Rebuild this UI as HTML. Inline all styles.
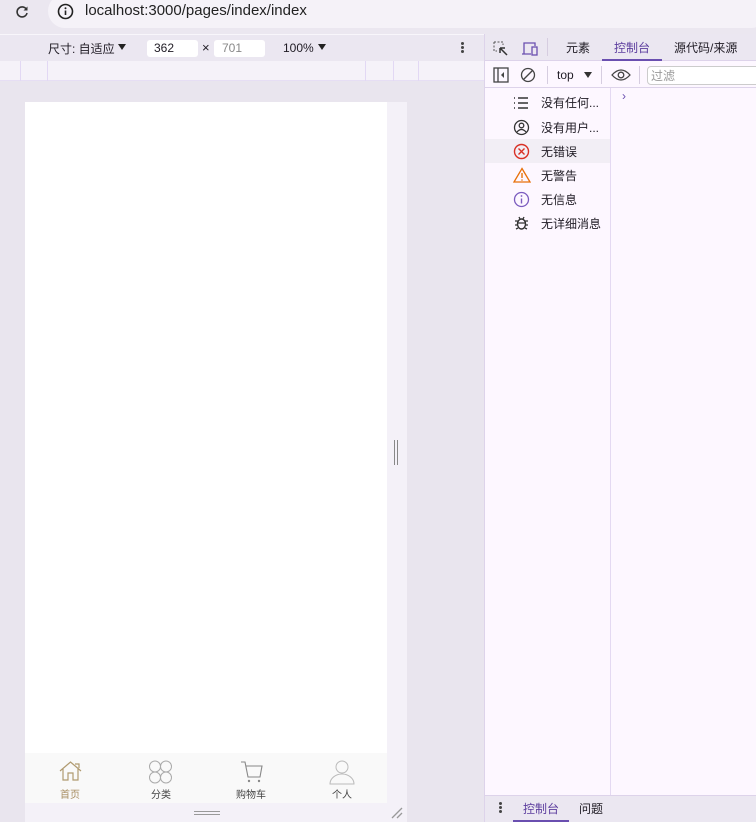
<!DOCTYPE html>
<html><head><meta charset="utf-8"><style>
*{margin:0;padding:0;box-sizing:border-box}
body{width:756px;height:822px;overflow:hidden;background:#e9e5ee;font-family:"Liberation Sans","Noto Sans CJK SC",sans-serif;position:relative;color:#1f1b24}
.a{position:absolute}
.t{font-size:12px;white-space:nowrap}
</style></head><body>
<div class="a" style="left:0;top:0;width:756px;height:34px;background:#ebe7f0"></div>
<div class="a" style="left:48px;top:-6px;width:720px;height:34px;border-radius:17px;background:#f5f2f8"></div>
<svg class="a" style="left:14px;top:4px" width="16" height="16" viewBox="0 0 16 16"><path d="M12.5 5.5A5 5 0 1 0 13 9" fill="none" stroke="#333" stroke-width="1.6"/><path d="M13.5 2.5v4h-4z" fill="#333"/></svg>
<svg class="a" style="left:57px;top:3px" width="17" height="17" viewBox="0 0 17 17"><circle cx="8.5" cy="8.5" r="7" fill="none" stroke="#222" stroke-width="1.6"/><rect x="7.7" y="7.5" width="1.6" height="4.5" fill="#222"/><circle cx="8.5" cy="5.3" r="1" fill="#222"/></svg>
<div class="a" style="left:85px;top:2px;font-size:15px;color:#222">localhost:3000/pages/index/index</div>
<div class="a" style="left:0;top:34px;width:484px;height:27px;background:#ebe7f1;border-top:1px solid #f8f6fb"></div>
<div class="a t" style="left:48px;top:40px">尺寸: 自适应</div>
<div class="a" style="left:118px;top:44px;width:0;height:0;border-left:4px solid transparent;border-right:4px solid transparent;border-top:6px solid #222"></div>
<div class="a" style="left:147px;top:40px;width:51px;height:17px;background:#fff;border-radius:3px"></div>
<div class="a t" style="left:154px;top:41px">362</div>
<div class="a t" style="left:202px;top:40px;font-size:13px">×</div>
<div class="a" style="left:214px;top:40px;width:51px;height:17px;background:#fff;border-radius:3px"></div>
<div class="a t" style="left:222px;top:41px;color:#888">701</div>
<div class="a t" style="left:283px;top:41px">100%</div>
<div class="a" style="left:318px;top:44px;width:0;height:0;border-left:4px solid transparent;border-right:4px solid transparent;border-top:6px solid #222"></div>
<div class="a" style="left:461px;top:42px;width:3px;height:3px;background:#444;border-radius:2px;box-shadow:0 4px #444,0 8px #444"></div>
<div class="a" style="left:0;top:61px;width:484px;height:20px;background:#f5f2f9;border-bottom:1px solid #e6def4"></div>
<div class="a" style="left:20px;top:61px;width:1px;height:20px;background:#e2d8f4"></div>
<div class="a" style="left:47px;top:61px;width:1px;height:20px;background:#e2d8f4"></div>
<div class="a" style="left:365px;top:61px;width:1px;height:20px;background:#e2d8f4"></div>
<div class="a" style="left:393px;top:61px;width:1px;height:20px;background:#e2d8f4"></div>
<div class="a" style="left:418px;top:61px;width:1px;height:20px;background:#e2d8f4"></div>
<div class="a" style="left:387px;top:102px;width:20px;height:720px;background:#f4f1f8"></div>
<div class="a" style="left:25px;top:803px;width:362px;height:19px;background:#f4f1f8"></div>
<div class="a" style="left:25px;top:102px;width:362px;height:701px;background:#fff"></div>
<div class="a" style="left:394px;top:440px;width:1px;height:25px;background:#888;box-shadow:3px 0 #888"></div>
<div class="a" style="left:194px;top:811px;width:26px;height:1px;background:#999;box-shadow:0 3px #999"></div>
<svg class="a" style="left:390px;top:806px" width="14" height="14"><path d="M2 12L12 2M7 12L12 7" stroke="#999" stroke-width="1.3"/></svg>
<div class="a" style="left:25px;top:753px;width:362px;height:50px;background:#f9f9f9"></div>
<svg class="a" style="left:59px;top:760px" width="23" height="22" viewBox="0 0 23 22"><path d="M1 11L11.5 2 22 11M4 9v11h5v-7h5v7h5V9M16 4h4v4" fill="none" stroke="#b09a70" stroke-width="1.2"/></svg>
<div class="a t" style="left:60px;top:786px;font-size:10px;color:#a88e62">首页</div>
<svg class="a" style="left:148px;top:760px" width="25" height="24"><circle cx="7" cy="6.5" r="5.5" fill="none" stroke="#aaa"/><circle cx="18" cy="6.5" r="5.5" fill="none" stroke="#aaa"/><circle cx="7" cy="17.5" r="5.5" fill="none" stroke="#aaa"/><circle cx="18" cy="17.5" r="5.5" fill="none" stroke="#aaa"/></svg>
<div class="a t" style="left:151px;top:786px;font-size:10px;color:#444">分类</div>
<svg class="a" style="left:240px;top:760px" width="24" height="24"><path d="M1 2h4l3 15h12l2-11H6" fill="none" stroke="#888" stroke-width="1.1"/><circle cx="9" cy="21" r="1.2" fill="#888"/><circle cx="19" cy="21" r="1.2" fill="#888"/></svg>
<div class="a t" style="left:236px;top:786px;font-size:10px;color:#444">购物车</div>
<svg class="a" style="left:329px;top:759px" width="26" height="26"><circle cx="13" cy="8" r="6" fill="none" stroke="#bbb"/><path d="M1 25a12 10 0 0 1 24 0z" fill="none" stroke="#bbb"/></svg>
<div class="a t" style="left:332px;top:786px;font-size:10px;color:#444">个人</div>
<div class="a" style="left:484px;top:34px;width:272px;height:788px;background:#fdf7ff;border-left:1px solid #ddd3ea"></div>
<div class="a" style="left:485px;top:34px;width:271px;height:27px;background:#ebe7f1;border-bottom:1px solid #ddd3ea"></div>
<svg class="a" style="left:493px;top:41px" width="16" height="16"><path d="M1 1h9v3M1 1v9h3" fill="none" stroke="#555" stroke-dasharray="2 1.5"/><path d="M7 7l7 7M7 7h5M7 7v5" stroke="#333" stroke-width="1.5" fill="none"/></svg>
<svg class="a" style="left:521px;top:41px" width="18" height="15"><path d="M3 13V2h11v3M1 13h9" stroke="#6a4fb0" fill="none" stroke-width="1.3"/><rect x="11" y="6" width="5" height="8" fill="none" stroke="#6a4fb0" stroke-width="1.3"/></svg>
<div class="a" style="left:547px;top:38px;width:1px;height:18px;background:#d6cde0"></div>
<div class="a t" style="left:566px;top:39px">元素</div>
<div class="a t" style="left:614px;top:39px;color:#5c3d9e">控制台</div>
<div class="a" style="left:602px;top:59px;width:60px;height:2px;background:#6a4fb0"></div>
<div class="a t" style="left:674px;top:39px">源代码/来源</div>
<div class="a" style="left:485px;top:62px;width:271px;height:26px;background:#fdf7ff;border-bottom:1px solid #ddd3ea"></div>
<svg class="a" style="left:493px;top:67px" width="16" height="16"><rect x="1" y="1" width="14" height="14" fill="none" stroke="#444" stroke-width="1.3"/><path d="M5 1v14" stroke="#444" stroke-width="1.3"/><path d="M11 5v6L8 8z" fill="#444"/></svg>
<svg class="a" style="left:520px;top:67px" width="16" height="16"><circle cx="8" cy="8" r="6.5" fill="none" stroke="#444" stroke-width="1.3"/><path d="M3.5 12.5l9-9" stroke="#444" stroke-width="1.3"/></svg>
<div class="a" style="left:547px;top:66px;width:1px;height:18px;background:#d6cde0"></div>
<div class="a t" style="left:557px;top:68px">top</div>
<div class="a" style="left:584px;top:72px;width:0;height:0;border-left:4px solid transparent;border-right:4px solid transparent;border-top:6px solid #333"></div>
<div class="a" style="left:601px;top:66px;width:1px;height:18px;background:#d6cde0"></div>
<svg class="a" style="left:611px;top:68px" width="20" height="14"><path d="M1 7Q10 -3 19 7Q10 17 1 7z" fill="none" stroke="#444" stroke-width="1.3"/><circle cx="10" cy="7" r="2.8" fill="none" stroke="#444" stroke-width="1.3"/></svg>
<div class="a" style="left:639px;top:66px;width:1px;height:18px;background:#d6cde0"></div>
<div class="a" style="left:647px;top:66px;width:115px;height:19px;border:1px solid #ccc;border-radius:4px;background:#fff"></div>
<div class="a t" style="left:651px;top:67px;color:#999">过滤</div>
<div class="a" style="left:610px;top:88px;width:1px;height:707px;background:#e4d9f2"></div>
<div class="a" style="left:485px;top:139px;width:125px;height:24px;background:#f2eef5"></div>
<div class="a" style="left:622px;top:89px;color:#6a4fb0;font-size:12px">›</div>
<svg class="a" style="left:513px;top:96px" width="16" height="14"><path d="M1 2h1M1 7h1M1 12h1M5 2h10M5 7h10M5 12h10" stroke="#333" stroke-width="1.4"/></svg>
<div class="a t" style="left:541px;top:94px">没有任何...</div>
<svg class="a" style="left:513px;top:119px" width="17" height="17"><circle cx="8.5" cy="8.5" r="7" fill="none" stroke="#333" stroke-width="1.3"/><circle cx="8.5" cy="6.5" r="2.3" fill="none" stroke="#333" stroke-width="1.3"/><path d="M4 13q4.5-5 9 0" fill="none" stroke="#333" stroke-width="1.3"/></svg>
<div class="a t" style="left:541px;top:119px">没有用户...</div>
<svg class="a" style="left:513px;top:143px" width="17" height="17"><circle cx="8.5" cy="8.5" r="7" fill="none" stroke="#d93025" stroke-width="1.4"/><path d="M5.5 5.5l6 6M11.5 5.5l-6 6" stroke="#d93025" stroke-width="1.4"/></svg>
<div class="a t" style="left:541px;top:143px">无错误</div>
<svg class="a" style="left:513px;top:167px" width="18" height="16"><path d="M9 1.5L17 15H1z" fill="none" stroke="#e8710a" stroke-width="1.3"/><path d="M9 6v5" stroke="#e8710a" stroke-width="1.4"/><circle cx="9" cy="13" r=".8" fill="#e8710a"/></svg>
<div class="a t" style="left:541px;top:167px">无警告</div>
<svg class="a" style="left:513px;top:191px" width="17" height="17"><circle cx="8.5" cy="8.5" r="7" fill="none" stroke="#7b5cbf" stroke-width="1.3"/><path d="M8.5 7.5v5" stroke="#7b5cbf" stroke-width="1.4"/><circle cx="8.5" cy="5" r=".9" fill="#7b5cbf"/></svg>
<div class="a t" style="left:541px;top:191px">无信息</div>
<svg class="a" style="left:514px;top:215px" width="15" height="16"><ellipse cx="7.5" cy="9" rx="4" ry="5" fill="none" stroke="#333" stroke-width="1.4"/><path d="M1 6h3M11 6h3M1 10h3M11 10h3M2 14l2-1M13 14l-2-1M5 2l1 2M10 2l-1 2M3.5 8h8" stroke="#333" stroke-width="1.3"/></svg>
<div class="a t" style="left:541px;top:215px">无详细消息</div>
<div class="a" style="left:485px;top:795px;width:271px;height:27px;background:#ebe7f1;border-top:1px solid #ddd3ea"></div>
<div class="a" style="left:499px;top:802px;width:3px;height:3px;background:#444;border-radius:2px;box-shadow:0 4px #444,0 8px #444"></div>
<div class="a t" style="left:523px;top:800px;color:#5c3d9e">控制台</div>
<div class="a" style="left:513px;top:820px;width:56px;height:2px;background:#6a4fb0"></div>
<div class="a t" style="left:579px;top:800px">问题</div>
</body></html>
